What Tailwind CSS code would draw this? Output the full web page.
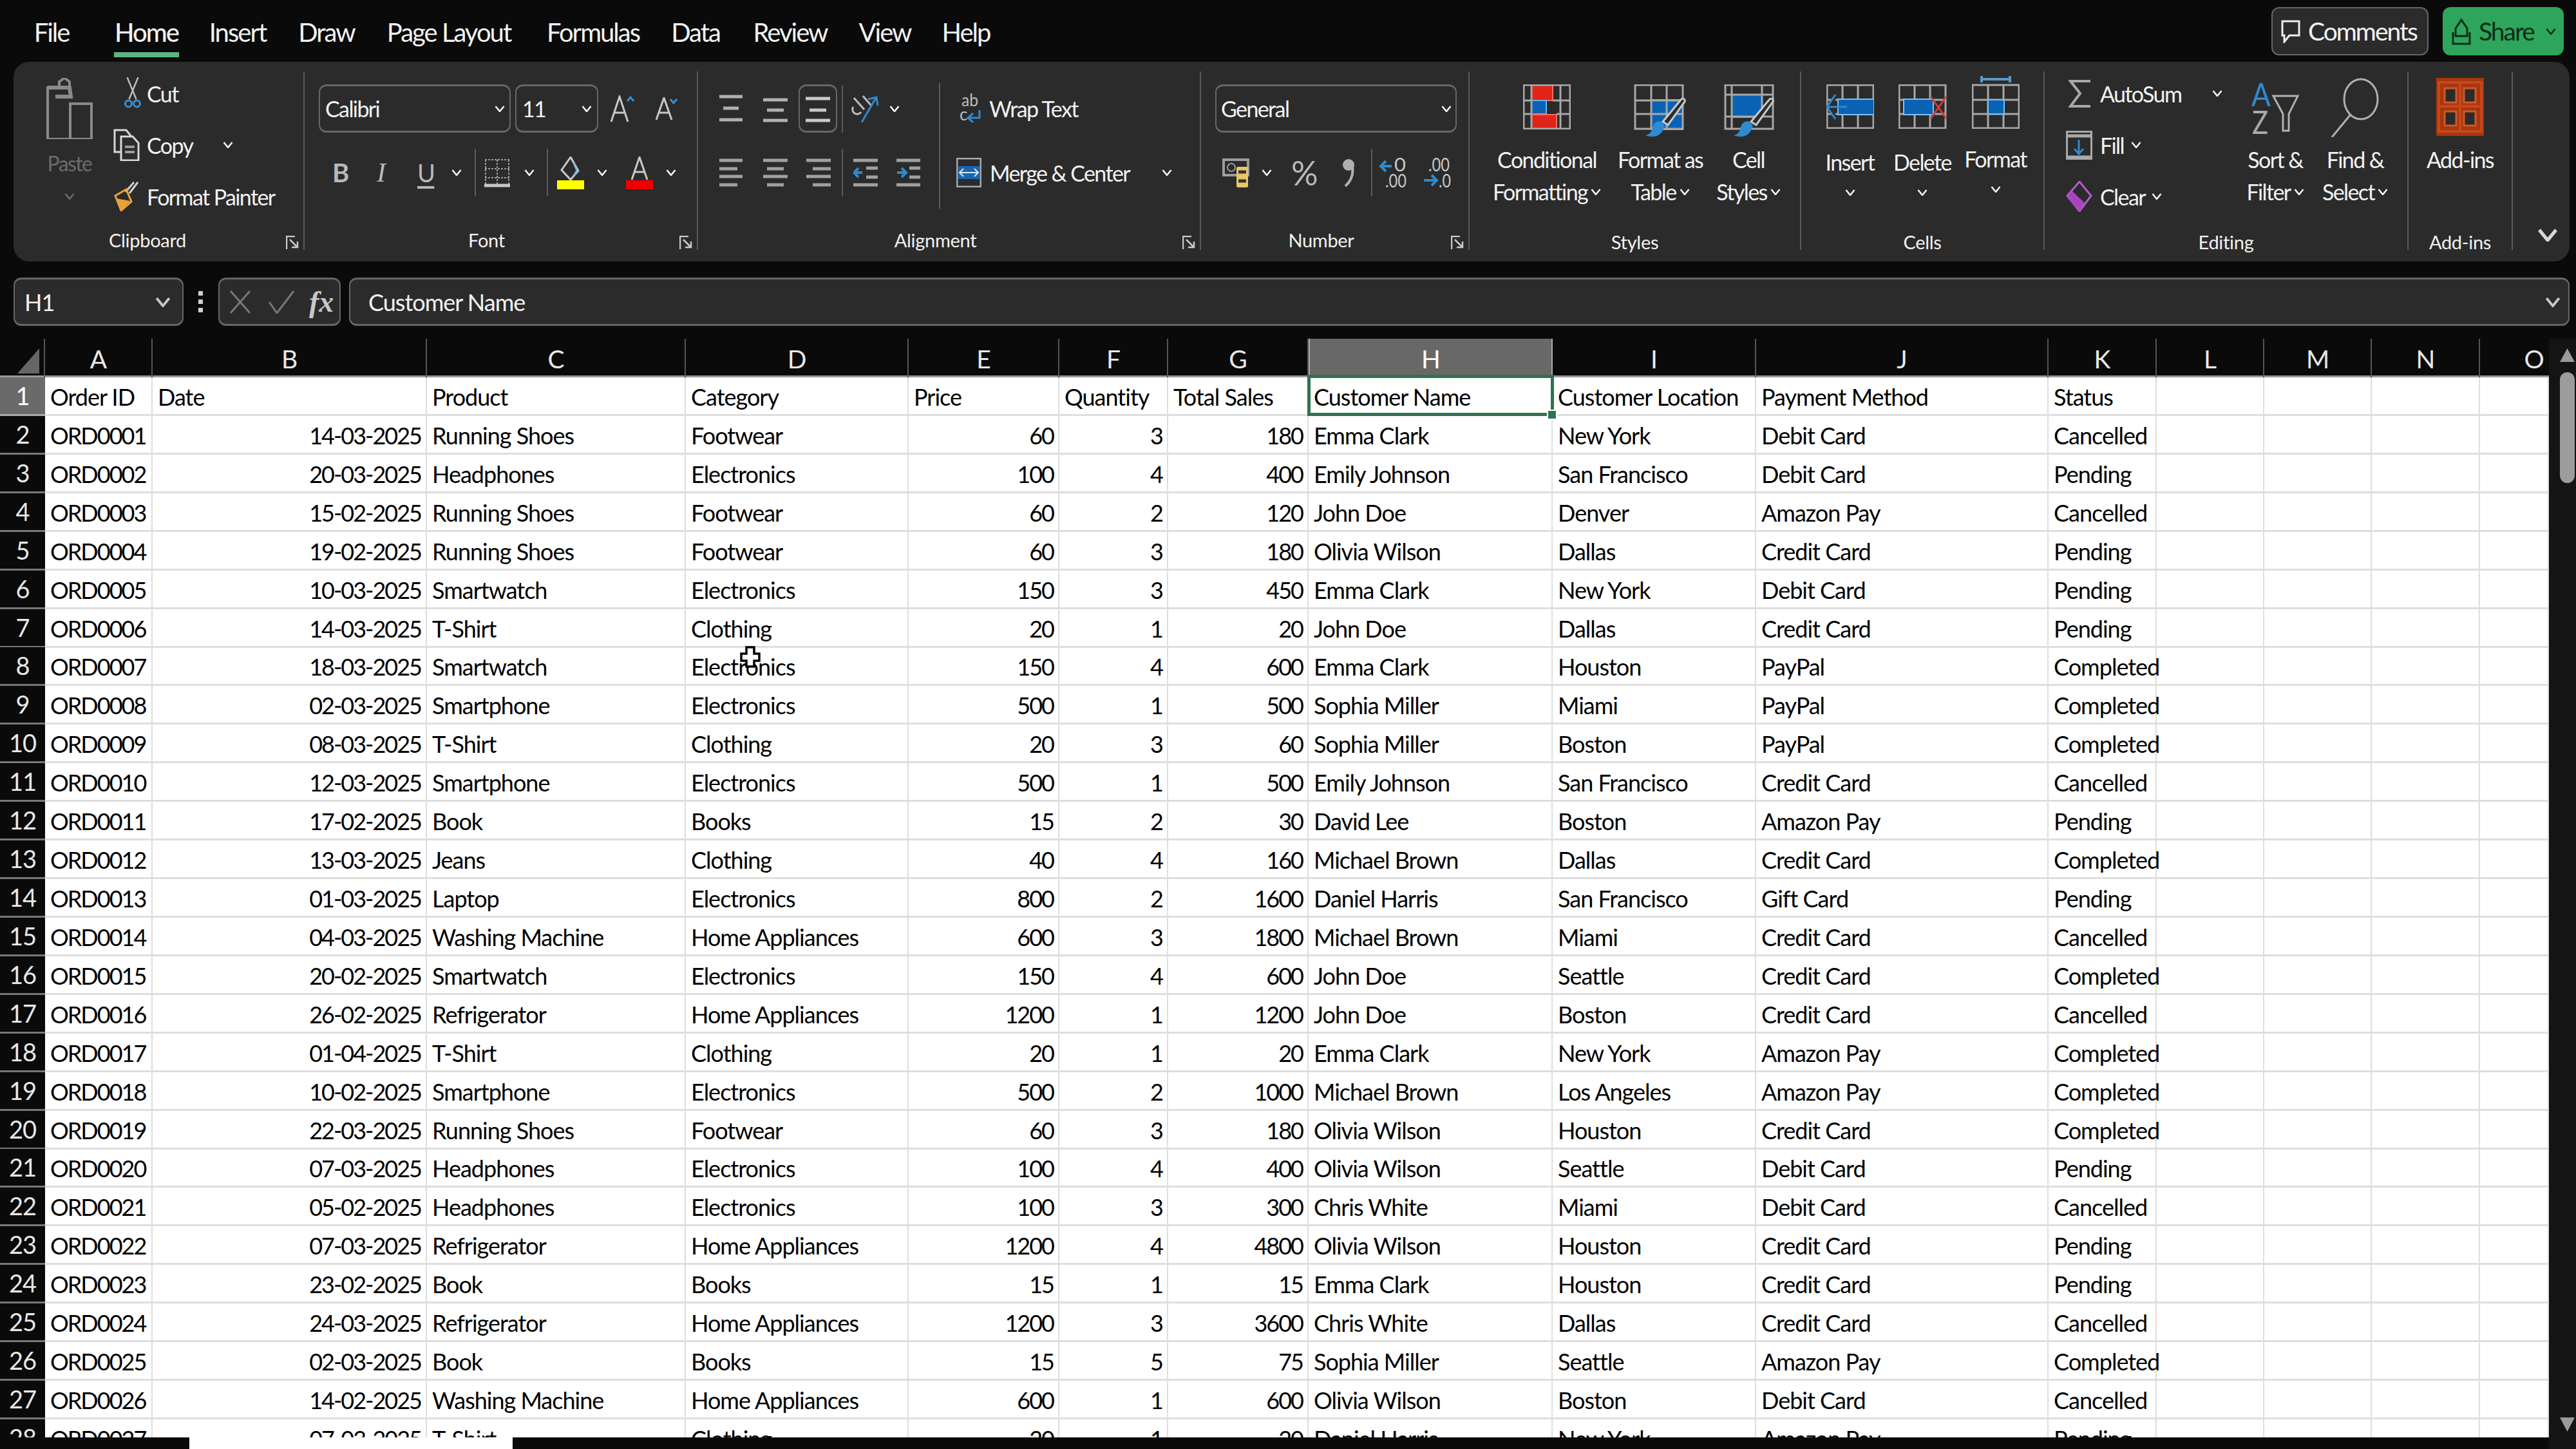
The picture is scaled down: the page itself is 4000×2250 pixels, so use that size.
<!DOCTYPE html>
<html lang="en">
  <head>
    <meta charset="UTF-8" />
    <title>Excel sales sheet</title>
    <script src="https://cdn.jsdelivr.net/npm/@tailwindcss/browser@4"></script>
  </head>
  <body class="w-[4000px] h-[2250px] overflow-hidden bg-[#0a0a0a] text-[#f2f2f2] text-[34px] tracking-[-1.6px] font-['Lato',sans-serif]">
    <svg class="hidden">
      <symbol id="chev" viewBox="0 0 16 10"><polyline points="1.5,1 8,9 14.5,1" fill="none" stroke="currentColor" stroke-width="2.6" /></symbol>
      <symbol id="launch" viewBox="0 0 21 22"><path d="M1 21V1h13M6 6l12 12M18 9v9H9" fill="none" stroke="#c8c8c8" stroke-width="2.5" /></symbol>
    </svg>

    <!-- tabs -->
    <header class="flex h-[96px] items-start">
      <nav class="flex items-start text-[40px] tracking-[-2px] leading-[100px]">
        <a class="ml-[54px] w-[52px] h-[89px] flex justify-center whitespace-nowrap">File</a>
        <a class="ml-[71px] w-[101px] h-[89px] flex justify-center whitespace-nowrap border-b-[8px] border-[#5cb37f] font-medium">Home</a>
        <a class="ml-[47px] w-[88px] h-[89px] flex justify-center whitespace-nowrap">Insert</a>
        <a class="ml-[54px] w-[80px] h-[89px] flex justify-center whitespace-nowrap">Draw</a>
        <a class="ml-[54px] w-[192px] h-[89px] flex justify-center whitespace-nowrap">Page Layout</a>
        <a class="ml-[57px] w-[142px] h-[89px] flex justify-center whitespace-nowrap">Formulas</a>
        <a class="ml-[53px] w-[70px] h-[89px] flex justify-center whitespace-nowrap">Data</a>
        <a class="ml-[58px] w-[108px] h-[89px] flex justify-center whitespace-nowrap">Review</a>
        <a class="ml-[55px] w-[76px] h-[89px] flex justify-center whitespace-nowrap">View</a>
        <a class="ml-[53px] w-[70px] h-[89px] flex justify-center whitespace-nowrap">Help</a>
      </nav>
      <div class="ml-auto mr-[19px] mt-[11px] flex gap-[22px] h-[75px] text-[39px] tracking-[-2px]">
        <button class="w-[244px] flex items-center pl-[13px] gap-[12px] bg-[#2b2b2b] border-2 border-[#666] rounded-[12px]">
          <svg class="w-[30px] h-[36px]" viewBox="0 0 30 36"><path d="M2 2h26v22H13l-8 10V24H2z" fill="none" stroke="#eee" stroke-width="3" /></svg>
          <span>Comments</span>
        </button>
        <button class="w-[188px] flex items-center pl-[14px] bg-[#2ea55c] rounded-[12px] text-[#0e2c18]">
          <svg class="w-[30px] h-[42px] mr-[12px]" viewBox="0 0 30 42"><path d="M2 22v18h26V22M6 16L15 3l9 13v12H6z" fill="none" stroke="#0e2c18" stroke-width="3" /></svg>
          <span>Share</span>
          <svg class="w-[16px] h-[10px] ml-[18px]"><use href="#chev" /></svg>
        </button>
      </div>
    </header>

    <!-- ribbon -->
    <section class="ml-[21px] w-[3969px] h-[310px] pt-[15px] flex bg-[#2b2b2b] rounded-[24px]">
      <!-- clipboard -->
      <div class="relative w-[452px] h-[277px] border-r-2 border-[#5a5a5a] flex flex-col">
        <div class="h-[246px] flex">
          <div class="w-[155px] pl-[19px] pt-[10px] flex flex-col items-center text-[#6c6c6c]">
            <svg class="w-[72px] h-[95px]" viewBox="0 0 72 95">
              <path d="M36 15V6l-8-6-8 6v9H2v80h34" fill="none" stroke="#8a8a8a" stroke-width="4" />
              <path d="M2 15h34l2 14H14" fill="none" stroke="#8a8a8a" stroke-width="6" />
              <path d="M37 40h33v55H37z" fill="#2b2b2b" stroke="#8a8a8a" stroke-width="4" />
            </svg>
            <span class="mt-[16px] text-[32px] leading-[44px]">Paste</span>
            <svg class="w-[16px] h-[10px] mt-[24px]"><use href="#chev" /></svg>
          </div>
          <div class="pt-[8px] flex flex-col gap-[28px]">
            <div class="h-[52px] flex items-center">
              <svg class="w-[52px] h-[50px] shrink-0 pl-[8px]" viewBox="0 0 25 50">
                <path d="M4 0l14 34M21 0L7 34" stroke="#bdbdbd" stroke-width="2.5" fill="none" />
                <circle cx="6" cy="41" r="5" fill="none" stroke="#3a8fd0" stroke-width="3" /><circle cx="19" cy="41" r="5" fill="none" stroke="#3a8fd0" stroke-width="3" />
              </svg>
              <span>Cut</span>
            </div>
            <div class="h-[52px] flex items-center">
              <svg class="w-[52px] h-[50px] shrink-0 pr-[11px]" viewBox="0 0 41 50">
                <path d="M20 36H2V2h18l8 10" fill="none" stroke="#d8d8d8" stroke-width="3" />
                <path d="M12 12h18l9 10v27H12z" fill="#2b2b2b" stroke="#d8d8d8" stroke-width="3" />
                <path d="M18 28h15M18 36h15" stroke="#9a9a9a" stroke-width="4" />
              </svg>
              <span>Copy</span>
              <svg class="w-[16px] h-[10px] ml-[47px]"><use href="#chev" /></svg>
            </div>
            <div class="h-[52px] flex items-center">
              <svg class="w-[52px] h-[46px] shrink-0 pr-[10px]" viewBox="0 0 42 46">
                <path d="M38 1L25 18M32 1L19 16" stroke="#d0d0d0" stroke-width="3" fill="none" />
                <path d="M20 12L3 22l9 23 16-14z" fill="none" stroke="#e8a33a" stroke-width="3" />
                <path d="M4 26l22 4-14 15z" fill="#e8a33a" />
              </svg>
              <span class="whitespace-nowrap">Format Painter</span>
            </div>
          </div>
        </div>
        <div class="relative h-[31px] pr-[34px] flex items-center justify-center text-[29px] tracking-[-0.3px]">
          <span>Clipboard</span>
          <svg class="absolute right-[6px] bottom-0 w-[21px] h-[22px]"><use href="#launch" /></svg>
        </div>
      </div>

      <!-- font -->
      <div class="relative w-[611px] h-[277px] border-r-2 border-[#5a5a5a] flex flex-col">
        <div class="h-[246px] pt-[20px]">
          <div class="h-[75px] flex items-center">
            <div class="ml-[22px] w-[298px] h-[75px] pl-[8px] pr-[7px] flex items-center justify-between border-2 border-t-[3px] border-b-[3px] border-[#666] rounded-[12px]">
              <span>Calibri</span><svg class="w-[16px] h-[10px]"><use href="#chev" /></svg>
            </div>
            <div class="ml-[7px] w-[129px] h-[75px] pl-[9px] pr-[8px] flex items-center justify-between border-2 border-t-[3px] border-b-[3px] border-[#666] rounded-[12px]">
              <span>11</span><svg class="w-[16px] h-[10px]"><use href="#chev" /></svg>
            </div>
            <svg class="ml-[19px] w-[38px] h-[42px]" viewBox="0 0 38 42">
              <path d="M1 41L14 2l13 39M6 27h16" fill="none" stroke="#c8c8c8" stroke-width="3" /><path d="M26 9l5-6 5 6" fill="none" stroke="#3a8fd0" stroke-width="3" />
            </svg>
            <svg class="ml-[32px] w-[34px] h-[36px]" viewBox="0 0 34 36">
              <path d="M1 35L13 1l12 34M6 24h14" fill="none" stroke="#c8c8c8" stroke-width="3" /><path d="M23 3l5 6 5-6" fill="none" stroke="#3a8fd0" stroke-width="3" />
            </svg>
          </div>
          <div class="mt-[25px] h-[74px] flex items-center">
            <span class="ml-[43px] w-[24px] text-[40px] font-bold text-[#b8b8b8]">B</span>
            <span class="ml-[45px] w-[16px] text-[42px] italic text-[#b8b8b8] font-['Liberation_Serif',serif]">I</span>
            <span class="ml-[47px] w-[22px] text-[38px] text-[#b8b8b8] underline underline-offset-[6px] decoration-[4px]">U</span>
            <svg class="ml-[31px] w-[16px] h-[10px]"><use href="#chev" /></svg>
            <span class="ml-[20px] w-[2px] h-[74px] bg-[#5a5a5a]"></span>
            <svg class="ml-[13px] w-[40px] h-[46px]" viewBox="0 0 40 46">
              <path d="M1 3h38M1 17h38M1 31h38M2 3v38M20 3v38M38 3v38" fill="none" stroke="#9c9c9c" stroke-width="2" stroke-dasharray="3 2" /><path d="M0 43h40" stroke="#c8c8c8" stroke-width="5" />
            </svg>
            <svg class="ml-[22px] w-[16px] h-[10px]"><use href="#chev" /></svg>
            <span class="ml-[19px] w-[2px] h-[74px] bg-[#5a5a5a]"></span>
            <svg class="ml-[14px] w-[42px] h-[51px]" viewBox="0 0 42 51">
              <path d="M21 1L7 21l14 15 12-14z" fill="none" stroke="#c8c8c8" stroke-width="3" /><path d="M26 10l5 12-6 9" fill="none" stroke="#7ab8e0" stroke-width="3" /><rect y="37" width="42" height="14" fill="#ffff00" />
            </svg>
            <svg class="ml-[20px] w-[16px] h-[10px]"><use href="#chev" /></svg>
            <svg class="ml-[29px] w-[42px] h-[51px]" viewBox="0 0 42 51">
              <path d="M9 36L21 1l12 35M13 24h16" fill="none" stroke="#c8c8c8" stroke-width="3" /><rect y="37" width="42" height="14" fill="#ee0000" />
            </svg>
            <svg class="ml-[20px] w-[16px] h-[10px]"><use href="#chev" /></svg>
          </div>
        </div>
        <div class="relative h-[31px] pr-[44px] flex items-center justify-center text-[29px] tracking-[-0.3px]">
          <span>Font</span>
          <svg class="absolute right-[6px] bottom-0 w-[21px] h-[22px]"><use href="#launch" /></svg>
        </div>
      </div>

      <!-- alignment -->
      <div class="relative w-[781px] h-[277px] border-r-2 border-[#5a5a5a] flex flex-col">
        <div class="h-[246px] flex items-start">
          <div class="w-[376px] h-[195px] mt-[18px] pt-[2px] border-r-2 border-[#5a5a5a]">
            <div class="h-[75px] flex items-center">
              <svg class="ml-[33px] w-[36px] h-[44px]" viewBox="0 0 36 44"><path d="M0 3h36M6 21h24M0 39h36" stroke="#b0b0b0" stroke-width="5" /></svg>
              <svg class="ml-[32px] w-[38px] h-[44px]" viewBox="0 0 38 44"><path d="M0 8h38M6 24h26M0 40h38" stroke="#b0b0b0" stroke-width="5" /></svg>
              <div class="ml-[17px] w-[60px] h-[75px] flex items-center justify-center border-2 border-t-[3px] border-b-[3px] border-[#666] rounded-[12px]">
                <svg class="w-[38px] h-[44px]" viewBox="0 0 38 44"><path d="M0 6h38M6 24h26M0 40h38" stroke="#c8c8c8" stroke-width="5" /></svg>
              </div>
              <span class="ml-[7px] w-[2px] h-[74px] bg-[#5a5a5a]"></span>
              <svg class="ml-[13px] w-[44px] h-[46px]" viewBox="0 0 44 46">
                <path d="M4 6l16 18M18 3l12 14M3 20a6 6 0 1 0 12 8" fill="none" stroke="#bdbdbd" stroke-width="3" /><path d="M16 44L38 6M26 8l13-3 2 13" fill="none" stroke="#2f8ad0" stroke-width="3" />
              </svg>
              <svg class="ml-[15px] w-[16px] h-[10px]"><use href="#chev" /></svg>
            </div>
            <div class="mt-[25px] h-[74px] flex items-center">
              <svg class="ml-[33px] w-[36px] h-[44px]" viewBox="0 0 36 44"><path d="M0 3h36M0 16h28M0 28h36M0 41h28" stroke="#a0a0a0" stroke-width="5" /></svg>
              <svg class="ml-[32px] w-[38px] h-[44px]" viewBox="0 0 38 44"><path d="M0 3h38M6 16h26M0 28h38M6 41h26" stroke="#a0a0a0" stroke-width="5" /></svg>
              <svg class="ml-[29px] w-[38px] h-[44px]" viewBox="0 0 38 44"><path d="M0 3h38M10 16h28M0 28h38M10 41h28" stroke="#a0a0a0" stroke-width="5" /></svg>
              <span class="ml-[17px] w-[2px] h-[74px] bg-[#5a5a5a]"></span>
              <svg class="ml-[16px] w-[38px] h-[44px]" viewBox="0 0 38 44"><path d="M0 3h38M20 15h18M20 29h18M0 41h38" stroke="#a0a0a0" stroke-width="5" /><path d="M14 22H2M8 15l-7 7 7 7" fill="none" stroke="#2f8ad0" stroke-width="4" /></svg>
              <svg class="ml-[29px] w-[37px] h-[44px]" viewBox="0 0 37 44"><path d="M0 3h37M20 15h17M20 29h17M0 41h37" stroke="#a0a0a0" stroke-width="5" /><path d="M1 22h12M8 15l7 7-7 7" fill="none" stroke="#2f8ad0" stroke-width="4" /></svg>
            </div>
          </div>
          <div class="pt-[20px]">
            <div class="h-[75px] flex items-center">
              <svg class="ml-[29px] w-[36px] h-[48px] tracking-normal overflow-visible" viewBox="0 0 36 48">
                <text x="4" y="20" font-size="26" fill="#bdbdbd" textLength="26" lengthAdjust="spacingAndGlyphs">ab</text><text x="1" y="42" font-size="26" fill="#bdbdbd">c</text>
                <path d="M32 26v12H15M22 31l-8 7 8 7" fill="none" stroke="#2f8ad0" stroke-width="3" />
              </svg>
              <span class="ml-[11px] whitespace-nowrap">Wrap Text</span>
            </div>
            <div class="mt-[25px] h-[74px] flex items-center">
              <svg class="ml-[25px] w-[39px] h-[46px]" viewBox="0 0 39 46">
                <rect x="1" y="1" width="37" height="44" fill="none" stroke="#a8a8a8" stroke-width="3" /><rect x="3" y="13" width="33" height="20" fill="#1767b0" />
                <path d="M5 23h29M11 17l-6 6 6 6M28 17l6 6-6 6" fill="none" stroke="#d8e8f5" stroke-width="2" />
              </svg>
              <span class="ml-[13px] w-[221px] whitespace-nowrap">Merge &amp; Center</span>
              <svg class="ml-[46px] w-[16px] h-[10px]"><use href="#chev" /></svg>
            </div>
          </div>
        </div>
        <div class="relative h-[31px] pr-[42px] flex items-center justify-center text-[29px] tracking-[-0.3px]">
          <span>Alignment</span>
          <svg class="absolute right-[6px] bottom-0 w-[21px] h-[22px]"><use href="#launch" /></svg>
        </div>
      </div>

      <!-- number -->
      <div class="relative w-[417px] h-[277px] border-r-2 border-[#5a5a5a] flex flex-col">
        <div class="h-[246px] pt-[20px]">
          <div class="h-[75px] flex items-center">
            <div class="ml-[22px] w-[375px] h-[75px] pl-[7px] pr-[6px] flex items-center justify-between border-2 border-t-[3px] border-b-[3px] border-[#666] rounded-[12px]">
              <span>General</span><svg class="w-[16px] h-[10px]"><use href="#chev" /></svg>
            </div>
          </div>
          <div class="mt-[25px] h-[74px] flex items-center">
            <svg class="ml-[33px] w-[42px] h-[46px]" viewBox="0 0 42 46">
              <rect x="2" y="3" width="38" height="24" fill="none" stroke="#9c9c9c" stroke-width="4" /><circle cx="14" cy="15" r="6" fill="none" stroke="#9c9c9c" stroke-width="2" />
              <rect x="22" y="14" width="18" height="32" rx="2" fill="#e8c66a" /><path d="M25 22h12M25 36h12" stroke="#333" stroke-width="5" />
            </svg>
            <svg class="ml-[19px] w-[16px] h-[10px]"><use href="#chev" /></svg>
            <span class="ml-[30px] w-[40px] text-[52px] leading-none text-[#b8b8b8] tracking-[-3px]">%</span>
            <svg class="ml-[40px] w-[18px] h-[44px]" viewBox="0 0 18 44"><circle cx="9" cy="10" r="9" fill="#b0b0b0" /><path d="M15 12c2 14-3 24-11 31" fill="none" stroke="#b0b0b0" stroke-width="4" /></svg>
            <span class="ml-[26px] w-[2px] h-[74px] bg-[#5a5a5a]"></span>
            <svg class="ml-[12px] w-[43px] h-[48px] tracking-normal overflow-visible" viewBox="0 0 43 48">
              <text x="22" y="22" font-size="29" fill="#c8c8c8" textLength="18" lengthAdjust="spacingAndGlyphs">0</text><text x="8" y="47" font-size="29" fill="#c8c8c8" textLength="33" lengthAdjust="spacingAndGlyphs">.00</text><path d="M18 14H2M9 6l-8 8 8 8" fill="none" stroke="#2f8ad0" stroke-width="4" />
            </svg>
            <svg class="ml-[24px] w-[43px] h-[48px] tracking-normal overflow-visible" viewBox="0 0 43 48">
              <text x="8" y="22" font-size="29" fill="#c8c8c8" textLength="33" lengthAdjust="spacingAndGlyphs">.00</text><text x="24" y="47" font-size="29" fill="#c8c8c8" textLength="19" lengthAdjust="spacingAndGlyphs">.0</text><path d="M1 36h19M13 28l8 8-8 8" fill="none" stroke="#2f8ad0" stroke-width="4" />
            </svg>
          </div>
        </div>
        <div class="relative h-[31px] pr-[42px] flex items-center justify-center text-[29px] tracking-[-0.3px]">
          <span>Number</span>
          <svg class="absolute right-[6px] bottom-0 w-[21px] h-[22px]"><use href="#launch" /></svg>
        </div>
      </div>

      <!-- styles -->
      <div class="w-[515px] h-[277px] border-r-2 border-[#5a5a5a] flex flex-col">
        <div class="h-[246px] flex pl-[2px]">
          <div class="w-[236px] flex flex-col items-center">
            <div class="mt-[10px] h-[92px] pt-[10px]">
              <svg class="w-[74px] h-[70px]" viewBox="0 0 74 70">
                <rect x="13" y="1" width="33" height="24" fill="#e02418" stroke="#ff6a62" stroke-width="2" /><rect x="13" y="25" width="23" height="21" fill="#0a62b5" stroke="#6ab6f0" stroke-width="2" /><rect x="13" y="47" width="39" height="22" fill="#e02418" stroke="#ff6a62" stroke-width="2" />
                <path d="M1 1h72v68H1zM1 25h12M46 25h27M1 46h12M52 46h21M13 1v68M58 1v68" fill="none" stroke="#a8a8a8" stroke-width="3" />
              </svg>
            </div>
            <div class="mt-[10px] text-center leading-[50px] whitespace-nowrap">
              <div>Conditional</div>
              <div class="flex items-center gap-[5px]">Formatting<svg class="w-[16px] h-[10px]"><use href="#chev" /></svg></div>
            </div>
          </div>
          <div class="w-[116px] flex flex-col items-center">
            <div class="mt-[10px] h-[92px] pt-[10px]">
              <svg class="w-[84px] h-[84px]" viewBox="0 0 84 84">
                <path d="M28 24h49v46H28z" fill="#0a62b5" stroke="#6ab6f0" stroke-width="2" />
                <path d="M3 1h74v68H3zM3 25h74M3 46h74M28 1v68M52 1v68" fill="none" stroke="#a8a8a8" stroke-width="3" />
                <path d="M74 24L46 58l8 5 26-36a3 3 0 0 0-6-3z" fill="#2b2b2b" stroke="#c8c8c8" stroke-width="3" />
                <path d="M44 58c-8-3-14 4-15 12-1 5-5 8-10 9 12 5 26 2 30-15z" fill="#2f8ad0" />
              </svg>
            </div>
            <div class="mt-[10px] text-center leading-[50px] whitespace-nowrap">
              <div>Format as</div>
              <div class="flex items-center justify-center gap-[5px]">Table<svg class="w-[16px] h-[10px]"><use href="#chev" /></svg></div>
            </div>
          </div>
          <div class="w-[158px] flex flex-col items-center">
            <div class="mt-[10px] h-[92px] pt-[10px]">
              <svg class="w-[84px] h-[84px]" viewBox="0 0 84 84">
                <path d="M16 16h47v35H16z" fill="#0a62b5" stroke="#6ab6f0" stroke-width="2" />
                <path d="M6 1h74v68H6zM6 16h74M6 50h74M16 1v68M63 1v50" fill="none" stroke="#a8a8a8" stroke-width="3" />
                <path d="M74 24L46 58l8 5 26-36a3 3 0 0 0-6-3z" fill="#2b2b2b" stroke="#c8c8c8" stroke-width="3" />
                <path d="M44 58c-8-3-14 4-15 12-1 5-5 8-10 9 12 5 26 2 30-15z" fill="#2f8ad0" />
              </svg>
            </div>
            <div class="mt-[10px] text-center leading-[50px] whitespace-nowrap">
              <div>Cell</div>
              <div class="flex items-center justify-center gap-[5px]">Styles<svg class="w-[16px] h-[10px]"><use href="#chev" /></svg></div>
            </div>
          </div>
        </div>
        <div class="h-[31px] pt-[6px] flex items-center justify-center text-[29px] tracking-[-0.3px]">Styles</div>
      </div>

      <!-- cells -->
      <div class="w-[378px] h-[277px] border-r-2 border-[#5a5a5a] flex flex-col">
        <div class="h-[246px] flex pl-[2px]">
          <div class="w-[148px] flex flex-col items-center">
            <div class="mt-[20px] h-[69px]">
              <svg class="w-[74px] h-[69px]" viewBox="0 0 74 69">
                <path d="M1 1h72v67H1zM1 24h72M1 46h72M25 1v67M49 1v67" fill="none" stroke="#a8a8a8" stroke-width="3" />
                <rect x="18" y="23" width="56" height="24" fill="#0a62b5" stroke="#7cc0f0" stroke-width="2" />
                <path d="M14 16L1 35l13 19M2 35h30" fill="#2b2b2b" stroke="#2f8ad0" stroke-width="3" />
              </svg>
            </div>
            <div class="mt-[27px] leading-[50px]">Insert</div>
            <svg class="mt-[17px] w-[16px] h-[10px]"><use href="#chev" /></svg>
          </div>
          <div class="w-[78px] flex flex-col items-center">
            <div class="mt-[20px] h-[69px]">
              <svg class="w-[75px] h-[69px]" viewBox="0 0 75 69">
                <path d="M1 1h72v67H1zM1 24h72M1 46h72M25 1v67M49 1v67" fill="none" stroke="#a8a8a8" stroke-width="3" />
                <rect x="8" y="23" width="46" height="24" fill="#0a62b5" stroke="#7cc0f0" stroke-width="2" />
                <path d="M50 19l24 34M74 19L50 53" stroke="#d83a34" stroke-width="3" />
              </svg>
            </div>
            <div class="mt-[27px] leading-[50px]">Delete</div>
            <svg class="mt-[17px] w-[16px] h-[10px]"><use href="#chev" /></svg>
          </div>
          <div class="w-[150px] flex flex-col items-center">
            <div class="mt-[5px] h-[84px]">
              <svg class="w-[74px] h-[84px]" viewBox="0 0 74 84">
                <path d="M15 2v10M59 2v10M15 7h44" stroke="#5a9ac8" stroke-width="4" />
                <path d="M1 16h72v67H1zM1 39h72M1 61h72M25 16v67M49 16v67" fill="none" stroke="#a8a8a8" stroke-width="3" />
                <rect x="25" y="39" width="25" height="22" fill="#0a62b5" stroke="#7cc0f0" stroke-width="2" />
              </svg>
            </div>
            <div class="mt-[22px] leading-[50px]">Format</div>
            <svg class="mt-[17px] w-[16px] h-[10px]"><use href="#chev" /></svg>
          </div>
        </div>
        <div class="h-[31px] pt-[6px] flex items-center justify-center text-[29px] tracking-[-0.3px]">Cells</div>
      </div>

      <!-- editing -->
      <div class="w-[565px] h-[277px] border-r-2 border-[#5a5a5a] flex flex-col">
        <div class="h-[246px] flex">
          <div class="w-[296px] pl-[33px] pt-[8px] flex flex-col gap-[28px]">
            <div class="h-[52px] flex items-center">
              <svg class="ml-[4px] mr-[14px] w-[35px] h-[45px]" viewBox="0 0 35 45"><path d="M34 3H3l15 19L3 42h31" fill="none" stroke="#a8a8a8" stroke-width="4" /></svg>
              <span class="w-[126px]">AutoSum</span>
              <svg class="ml-[48px] w-[16px] h-[10px]"><use href="#chev" /></svg>
            </div>
            <div class="h-[52px] flex items-center">
              <svg class="mr-[12px] w-[41px] h-[45px]" viewBox="0 0 41 45">
                <rect x="1.500" y="1.500" width="38" height="42" fill="none" stroke="#a8a8a8" stroke-width="3" /><path d="M2 8h37M2 41h37" stroke="#a8a8a8" stroke-width="5" /><path d="M20 14v22M13 28l7 8 7-8" fill="none" stroke="#2f8ad0" stroke-width="3" />
              </svg>
              <span class="w-[37px]">Fill</span>
              <svg class="ml-[11px] w-[16px] h-[10px]"><use href="#chev" /></svg>
            </div>
            <div class="h-[52px] flex items-center">
              <svg class="mr-[12px] w-[41px] h-[48px]" viewBox="0 0 41 48"><path d="M21 1l18 22-18 24L2 23z" fill="none" stroke="#b45cc8" stroke-width="3" /><path d="M10 16l19 18-8 13L2 26z" fill="#a845bd" /></svg>
              <span class="w-[69px]">Clear</span>
              <svg class="ml-[11px] w-[16px] h-[10px]"><use href="#chev" /></svg>
            </div>
          </div>
          <div class="w-[124px] flex flex-col items-center">
            <div class="mt-[10px] h-[92px] flex items-center">
              <svg class="w-[75px] h-[84px] tracking-normal overflow-visible" viewBox="0 0 75 84">
                <text x="0" y="40" font-size="50" fill="#2f8ad0" textLength="30" lengthAdjust="spacingAndGlyphs">A</text><text x="1" y="83" font-size="50" fill="#a8a8a8" textLength="25" lengthAdjust="spacingAndGlyphs">Z</text>
                <path d="M34 24h38L58 52v26H49V52z" fill="none" stroke="#b0b0b0" stroke-width="3" />
              </svg>
            </div>
            <div class="mt-[10px] text-center leading-[50px] whitespace-nowrap">
              <div>Sort &amp;</div>
              <div class="flex items-center justify-center gap-[5px]">Filter<svg class="w-[16px] h-[10px]"><use href="#chev" /></svg></div>
            </div>
          </div>
          <div class="w-[124px] flex flex-col items-center">
            <div class="mt-[10px] h-[92px] flex items-center">
              <svg class="w-[77px] h-[92px]" viewBox="0 0 77 92"><ellipse cx="47" cy="33" rx="26" ry="31" fill="none" stroke="#b0b0b0" stroke-width="3" /><path d="M30 58L2 92" stroke="#b0b0b0" stroke-width="3" /></svg>
            </div>
            <div class="mt-[10px] text-center leading-[50px] whitespace-nowrap">
              <div>Find &amp;</div>
              <div class="flex items-center justify-center gap-[5px]">Select<svg class="w-[16px] h-[10px]"><use href="#chev" /></svg></div>
            </div>
          </div>
        </div>
        <div class="h-[31px] pt-[6px] flex items-center justify-center text-[29px] tracking-[-0.3px]">Editing</div>
      </div>

      <!-- add-ins -->
      <div class="w-[162px] h-[277px] border-r-2 border-[#5a5a5a] flex flex-col">
        <div class="h-[246px] flex flex-col items-center">
          <svg class="mt-[10px] w-[74px] h-[90px]" viewBox="0 0 74 90">
            <rect width="74" height="90" fill="#a8360f" />
            <path d="M4 7h66v76H4zM4 44h66M37 7v76" fill="none" stroke="#c8481a" stroke-width="4" />
            <rect x="13" y="16" width="18" height="22" fill="#2b2b2b" stroke="#d0582a" stroke-width="3" /><rect x="43" y="16" width="18" height="22" fill="#2b2b2b" stroke="#d0582a" stroke-width="3" /><rect x="13" y="52" width="18" height="22" fill="#2b2b2b" stroke="#d0582a" stroke-width="3" /><rect x="43" y="52" width="18" height="22" fill="#2b2b2b" stroke="#d0582a" stroke-width="3" />
          </svg>
          <div class="mt-[12px] leading-[50px]">Add-ins</div>
        </div>
        <div class="h-[31px] pt-[6px] flex items-center justify-center text-[29px] tracking-[-0.3px]">Add-ins</div>
      </div>
      <div class="w-[86px] h-[277px] pl-[38px] pb-[13px] flex items-end">
        <svg class="w-[32px] h-[20px] text-[#d8d8d8]"><use href="#chev" /></svg>
      </div>
    </section>

    <!-- formula bar -->
    <section class="mt-[25px] ml-[21px] h-[75px] flex">
      <div class="w-[264px] pl-[15px] pr-[18px] flex items-center justify-between bg-[#2b2b2b] border-2 border-t-[3px] border-b-[3px] border-[#666] rounded-[12px] text-[36px] tracking-[-1px]">
        <span>H1</span><svg class="w-[24px] h-[16px] text-[#c8c8c8]"><use href="#chev" /></svg>
      </div>
      <div class="w-[54px] flex flex-col items-center justify-center gap-[6px]">
        <i class="w-[7px] h-[7px] bg-[#d0d0d0] ml-[-2px]"></i><i class="w-[7px] h-[7px] bg-[#d0d0d0] ml-[-2px]"></i><i class="w-[7px] h-[7px] bg-[#d0d0d0] ml-[-2px]"></i>
      </div>
      <div class="w-[190px] pl-[15px] flex items-center bg-[#2b2b2b] border-2 border-t-[3px] border-b-[3px] border-[#666] rounded-[12px]">
        <svg class="w-[34px] h-[36px]" viewBox="0 0 34 36"><path d="M2 1l30 34M32 1L2 35" stroke="#777" stroke-width="3" /></svg>
        <svg class="ml-[26px] w-[42px] h-[36px]" viewBox="0 0 42 36"><path d="M2 18l12 17L40 1" fill="none" stroke="#777" stroke-width="3" /></svg>
        <span class="ml-[22px] text-[46px] italic font-bold text-[#c8c8c8] tracking-normal font-['Liberation_Serif',serif]">fx</span>
      </div>
      <div class="ml-[13px] w-[3448px] pl-[28px] pr-[12px] flex items-center justify-between bg-[#2b2b2b] border-2 border-t-[3px] border-b-[3px] border-[#666] rounded-[12px] text-[36px] tracking-[-1px]">
        <span>Customer Name</span><svg class="w-[24px] h-[16px] text-[#c8c8c8]"><use href="#chev" /></svg>
      </div>
    </section>

    <!-- sheet -->
    <section class="mt-[20px] h-[1724px] flex">
      <div class="w-[3958px] flex flex-col">
        <div id="grid" class="relative h-[1706px] overflow-hidden bg-white text-black text-[36px] tracking-[-1px]"></div>
        <div class="flex-1 flex">
          <div class="w-[294px] bg-[#0a0a0a] rounded-tr-[10px]"></div>
          <div class="w-[502px] bg-white"></div>
          <div class="flex-1 bg-[#0a0a0a] rounded-tl-[10px]"></div>
        </div>
      </div>
      <div class="flex-1 bg-[#141414] flex flex-col items-center pl-[15px]">
        <svg class="mt-[15px] w-[23px] h-[21px]" viewBox="0 0 23 21"><path d="M11.500 0L23 21H0z" fill="#9a9a9a" /></svg>
        <div class="mt-[16px] w-[23px] h-[172px] rounded-[12px] bg-[#9c9c9c]"></div>
        <svg class="mt-[1451px] w-[23px] h-[22px]" viewBox="0 0 23 22"><path d="M0 0h23L11.500 22z" fill="#9a9a9a" /></svg>
      </div>
    </section>

    <script>
      const rows = [
        ["ORD0001","14-03-2025","Running Shoes","Footwear",60,3,180,"Emma Clark","New York","Debit Card","Cancelled"],
        ["ORD0002","20-03-2025","Headphones","Electronics",100,4,400,"Emily Johnson","San Francisco","Debit Card","Pending"],
        ["ORD0003","15-02-2025","Running Shoes","Footwear",60,2,120,"John Doe","Denver","Amazon Pay","Cancelled"],
        ["ORD0004","19-02-2025","Running Shoes","Footwear",60,3,180,"Olivia Wilson","Dallas","Credit Card","Pending"],
        ["ORD0005","10-03-2025","Smartwatch","Electronics",150,3,450,"Emma Clark","New York","Debit Card","Pending"],
        ["ORD0006","14-03-2025","T-Shirt","Clothing",20,1,20,"John Doe","Dallas","Credit Card","Pending"],
        ["ORD0007","18-03-2025","Smartwatch","Electronics",150,4,600,"Emma Clark","Houston","PayPal","Completed"],
        ["ORD0008","02-03-2025","Smartphone","Electronics",500,1,500,"Sophia Miller","Miami","PayPal","Completed"],
        ["ORD0009","08-03-2025","T-Shirt","Clothing",20,3,60,"Sophia Miller","Boston","PayPal","Completed"],
        ["ORD0010","12-03-2025","Smartphone","Electronics",500,1,500,"Emily Johnson","San Francisco","Credit Card","Cancelled"],
        ["ORD0011","17-02-2025","Book","Books",15,2,30,"David Lee","Boston","Amazon Pay","Pending"],
        ["ORD0012","13-03-2025","Jeans","Clothing",40,4,160,"Michael Brown","Dallas","Credit Card","Completed"],
        ["ORD0013","01-03-2025","Laptop","Electronics",800,2,1600,"Daniel Harris","San Francisco","Gift Card","Pending"],
        ["ORD0014","04-03-2025","Washing Machine","Home Appliances",600,3,1800,"Michael Brown","Miami","Credit Card","Cancelled"],
        ["ORD0015","20-02-2025","Smartwatch","Electronics",150,4,600,"John Doe","Seattle","Credit Card","Completed"],
        ["ORD0016","26-02-2025","Refrigerator","Home Appliances",1200,1,1200,"John Doe","Boston","Credit Card","Cancelled"],
        ["ORD0017","01-04-2025","T-Shirt","Clothing",20,1,20,"Emma Clark","New York","Amazon Pay","Completed"],
        ["ORD0018","10-02-2025","Smartphone","Electronics",500,2,1000,"Michael Brown","Los Angeles","Amazon Pay","Completed"],
        ["ORD0019","22-03-2025","Running Shoes","Footwear",60,3,180,"Olivia Wilson","Houston","Credit Card","Completed"],
        ["ORD0020","07-03-2025","Headphones","Electronics",100,4,400,"Olivia Wilson","Seattle","Debit Card","Pending"],
        ["ORD0021","05-02-2025","Headphones","Electronics",100,3,300,"Chris White","Miami","Debit Card","Cancelled"],
        ["ORD0022","07-03-2025","Refrigerator","Home Appliances",1200,4,4800,"Olivia Wilson","Houston","Credit Card","Pending"],
        ["ORD0023","23-02-2025","Book","Books",15,1,15,"Emma Clark","Houston","Credit Card","Pending"],
        ["ORD0024","24-03-2025","Refrigerator","Home Appliances",1200,3,3600,"Chris White","Dallas","Credit Card","Cancelled"],
        ["ORD0025","02-03-2025","Book","Books",15,5,75,"Sophia Miller","Seattle","Amazon Pay","Completed"],
        ["ORD0026","14-02-2025","Washing Machine","Home Appliances",600,1,600,"Olivia Wilson","Boston","Debit Card","Cancelled"],
        ["ORD0027","07-03-2025","T-Shirt","Clothing",20,1,20,"Daniel Harris","New York","Amazon Pay","Pending"],
      ];
      const head = ["Order ID","Date","Product","Category","Price","Quantity","Total Sales","Customer Name","Customer Location","Payment Method","Status"];
      const cols = "A B C D E F G H I J K L M N O".split(" ");
      const track = "grid grid-cols-[70px_167px_426px_402px_346px_234px_169px_218px_379px_316px_454px_168px_167px_167px_168px_107px]";

      // column letters
      let html = `<div class="${track} h-[60px] bg-[#0a0a0a] text-[#e8e8e8] text-[39px] border-b-[3px] border-[#999]">
        <div class="flex items-end justify-end pr-[7px] pb-[7px] border-r-2 border-[#555]">
          <svg class="w-[34px] h-[39px]" viewBox="0 0 34 39"><path d="M34 0v39H0z" fill="#666" /></svg>
        </div>`;
      cols.forEach((c) => {
        if (c === "H") {
          html += `<div class="flex items-center justify-center pt-[2px] bg-[#686868] text-white border-x-2 border-[#aaa]">H</div>`;
        } else if (c === "O") {
          // last column runs on behind the scroll bar
          html += `<div class="flex items-center justify-center pt-[2px] pl-[60px]">O</div>`;
        } else {
          html += `<div class="flex items-center justify-center pt-[2px] border-r-2 border-[#555]">${c}</div>`;
        }
      });
      html += `</div>`;

      // rows
      [head].concat(rows).forEach((row, i) => {
        const num = i === 0
          ? `<div class="flex items-center justify-center bg-[#6a6a6a] text-white text-[38px] border-b-[3px] border-[#aaa]">1</div>`
          : `<div class="flex items-center justify-center bg-[#0a0a0a] text-[#e8e8e8] text-[38px] border-b-[3px] border-[#777]">${i + 1}</div>`;
        html += `<div class="${track} h-[59.93px]">${num}`;
        for (let c = 0; c < 15; c++) {
          const v = c < row.length ? row[c] : "";
          const right = i > 0 && (c === 1 || c === 4 || c === 5 || c === 6);
          if (right) {
            html += `<div class="flex items-center justify-end pr-[7px] pt-[3px] whitespace-nowrap tracking-[-2px] border-r-2 border-b-[3px] border-[#dedede]">${v}</div>`;
          } else if (i > 0 && c === 0) {
            html += `<div class="flex items-center pl-[8px] pt-[3px] whitespace-nowrap tracking-[-2px] border-r-2 border-b-[3px] border-[#dedede]">${v}</div>`;
          } else {
            html += `<div class="flex items-center pl-[8px] pt-[3px] whitespace-nowrap border-r-2 border-b-[3px] border-[#dedede]">${v}</div>`;
          }
        }
        html += `</div>`;
      });

      // active cell and mouse pointer sit over the grid
      html += `<div class="absolute left-[2030px] top-[56px] w-[383px] h-[64px] border-[5px] border-[#2f7350]"></div>
        <div class="absolute left-[2404px] top-[112px] w-[12px] h-[12px] bg-[#2f7350] outline-2 outline-white"></div>
        <svg class="absolute left-[1149px] top-[477px] w-[32px] h-[34px]" viewBox="0 0 32 34"><path d="M10 2h12v10h8v11h-8v9H10v-9H2V12h8z" fill="#fff" stroke="#000" stroke-width="3.500" /></svg>`;

      document.getElementById("grid").innerHTML = html;
    </script>
  </body>
</html>
